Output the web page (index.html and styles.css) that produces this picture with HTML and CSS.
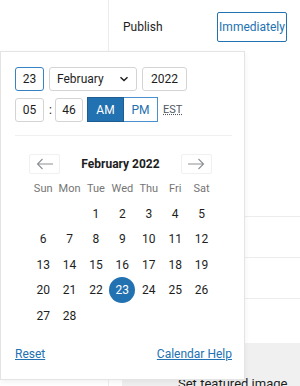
FILE: index.html
```html
<!DOCTYPE html>
<html>
<head>
  <meta name="viewport" content="width=device-width, initial-scale=1.0">
  <link rel="stylesheet" href="styles.css">
</head>
<body>

<div class="layout">
  <div class="editor"></div>

  <div class="sidebar">
    <div class="publish_row">
      <span class="publish_label">Publish</span>
      <button class="publish_btn">Immediately</button>
    </div>
    <div class="panel_row"></div>
    <div class="panel_row"></div>
    <div class="featured">
      <span>Set featured image</span>
    </div>
  </div>
</div>

<div class="popover">

  <div class="date_row">
    <div class="field day_field is_focus">23</div>
    <div class="field month_field">
      February
      <svg width="12" height="12" viewBox="0 0 12 12"><path d="M2.5 4.2 6 7.6 9.5 4.2" fill="none" stroke="#1e1e1e" stroke-width="1.4"/></svg>
    </div>
    <div class="field year_field">2022</div>
  </div>

  <div class="time_row">
    <div class="field hour_field">05</div>
    <span class="colon">:</span>
    <div class="field minute_field">46</div>
    <div class="ampm">
      <span class="ampm_btn am_btn">AM</span>
      <span class="ampm_btn pm_btn">PM</span>
    </div>
    <abbr class="zone">EST</abbr>
  </div>

  <div class="separator"></div>

  <div class="cal_nav">
    <div class="nav_btn">
      <svg width="20" height="12" viewBox="0 0 20 12"><path d="M18 6H2.5M7.5 1 2.5 6l5 5" fill="none" stroke="#8c8f94" stroke-width="1.1"/></svg>
    </div>
    <div class="cal_title">February 2022</div>
    <div class="nav_btn">
      <svg width="20" height="12" viewBox="0 0 20 12"><path d="M2 6h15.5M12.5 1l5 5-5 5" fill="none" stroke="#8c8f94" stroke-width="1.1"/></svg>
    </div>
  </div>

  <div class="cal_grid">
    <div class="weekday">Sun</div>
    <div class="weekday">Mon</div>
    <div class="weekday">Tue</div>
    <div class="weekday">Wed</div>
    <div class="weekday">Thu</div>
    <div class="weekday">Fri</div>
    <div class="weekday">Sat</div>

    <div class="day"></div>
    <div class="day"></div>
    <div class="day"><span>1</span></div>
    <div class="day"><span>2</span></div>
    <div class="day"><span>3</span></div>
    <div class="day"><span>4</span></div>
    <div class="day"><span>5</span></div>

    <div class="day"><span>6</span></div>
    <div class="day"><span>7</span></div>
    <div class="day"><span>8</span></div>
    <div class="day"><span>9</span></div>
    <div class="day"><span>10</span></div>
    <div class="day"><span>11</span></div>
    <div class="day"><span>12</span></div>

    <div class="day"><span>13</span></div>
    <div class="day"><span>14</span></div>
    <div class="day"><span>15</span></div>
    <div class="day"><span>16</span></div>
    <div class="day"><span>17</span></div>
    <div class="day"><span>18</span></div>
    <div class="day"><span>19</span></div>

    <div class="day"><span>20</span></div>
    <div class="day"><span>21</span></div>
    <div class="day"><span>22</span></div>
    <div class="day selected"><span>23</span></div>
    <div class="day"><span>24</span></div>
    <div class="day"><span>25</span></div>
    <div class="day"><span>26</span></div>

    <div class="day"><span>27</span></div>
    <div class="day"><span>28</span></div>
  </div>

  <div class="pop_footer">
    <a href="#" class="link">Reset</a>
    <a href="#" class="link">Calendar Help</a>
  </div>

</div>

</body>
</html>
```

FILE: styles.css
```css
html {
  height: 100%;
}
body {
  margin: 0;
  height: 100%;
  background: #fff;
  font-family: Roboto, "Liberation Sans", sans-serif;
  font-size: 12px;
  color: #1e1e1e;
  overflow: hidden;
}

.layout {
  display: flex;
  height: 100%;
}

.editor {
  width: 108px;
  border-right: 1px solid #ececec;
}

.sidebar {
  flex: 1;
  display: flex;
  flex-direction: column;
  overflow: hidden;
}

.publish_row {
  display: flex;
  justify-content: space-between;
  align-items: flex-start;
  padding: 12px 13px 0 14px;
  height: 204px;
  flex-shrink: 0;
  border-bottom: 1px solid #ececec;
}

.publish_label {
  line-height: 30px;
}

.publish_btn {
  height: 30px;
  width: 70px;
  padding: 0;
  border: 1px solid #2271b1;
  border-radius: 2px;
  background: #fff;
  color: #2271b1;
  font-family: inherit;
  font-size: 12px;
}

.panel_row {
  height: 40px;
  flex-shrink: 0;
  border-bottom: 1px solid #ececec;
}

.featured {
  margin: 44px 0 0 13px;
  flex: 1;
  min-height: 0;
  background: #f0f0f0;
  padding: 33px 0 0 56px;
  font-size: 13px;
}

/* the date picker popover */
.popover {
  position: absolute;
  left: 0;
  top: 51px;
  width: 215px;
  height: 298px;
  padding: 15px 14px 14px 14px;
  background: #fff;
  border: 1px solid #e4e4e4;
  box-shadow: 0 2px 6px rgba(0, 0, 0, 0.06);
}

.date_row,
.time_row {
  display: flex;
  align-items: center;
  gap: 5px;
}

.time_row {
  margin-top: 6px;
}

.field {
  box-sizing: border-box;
  height: 24px;
  border: 1px solid #d4d4d4;
  border-radius: 3px;
  display: flex;
  align-items: center;
  justify-content: center;
}

.day_field,
.hour_field {
  width: 29px;
}

.is_focus {
  border: 1.5px solid #3582c4;
}

.month_field {
  width: 88px;
  justify-content: space-between;
  padding: 0 6px 0 7px;
}

.year_field {
  width: 45px;
}

.colon {
  width: 1px;
  text-align: center;
}

.minute_field {
  width: 28px;
}

.ampm {
  display: flex;
  height: 25px;
  margin-left: -1px;
}

.ampm_btn {
  box-sizing: border-box;
  display: flex;
  align-items: center;
  justify-content: center;
  border: 1px solid #2271b1;
}

.am_btn {
  width: 37px;
  background: #2271b1;
  color: #fff;
  border-color: #1d5d91;
}

.pm_btn {
  width: 34px;
  color: #2271b1;
  border-left: none;
  border-color: #4a90cf;
}

.zone {
  font-size: 11px;
  color: #50575e;
  text-decoration: underline dotted;
}

.separator {
  height: 1px;
  background: #efefef;
  margin-top: 13px;
  width: 217px;
}

.cal_nav {
  display: flex;
  align-items: center;
  justify-content: space-between;
  margin-top: 18px;
  padding: 0 20px 0 14px;
  width: 183px;
}

.nav_btn {
  width: 29px;
  height: 18px;
  border: 1px solid #f0f0f0;
  border-radius: 2px;
  display: flex;
  align-items: center;
  justify-content: center;
}

.cal_title {
  font-weight: bold;
  font-size: 12px;
}

.cal_grid {
  display: grid;
  grid-template-columns: repeat(7, 26.4px);
  grid-template-rows: 26px;
  grid-auto-rows: 25.5px;
  margin-left: 15px;
  margin-top: 1px;
}

.weekday {
  display: flex;
  align-items: center;
  justify-content: center;
  color: #757575;
  font-size: 11px;
}

.day {
  display: flex;
  align-items: center;
  justify-content: center;
}

.day span {
  width: 26px;
  height: 26px;
  border-radius: 50%;
  display: flex;
  align-items: center;
  justify-content: center;
}

.selected span {
  background: #2271b1;
  color: #fff;
}

.pop_footer {
  display: flex;
  justify-content: space-between;
  margin-top: 18px;
  width: 217px;
}

.link {
  color: #2271b1;
  font-size: 12px;
}
```
